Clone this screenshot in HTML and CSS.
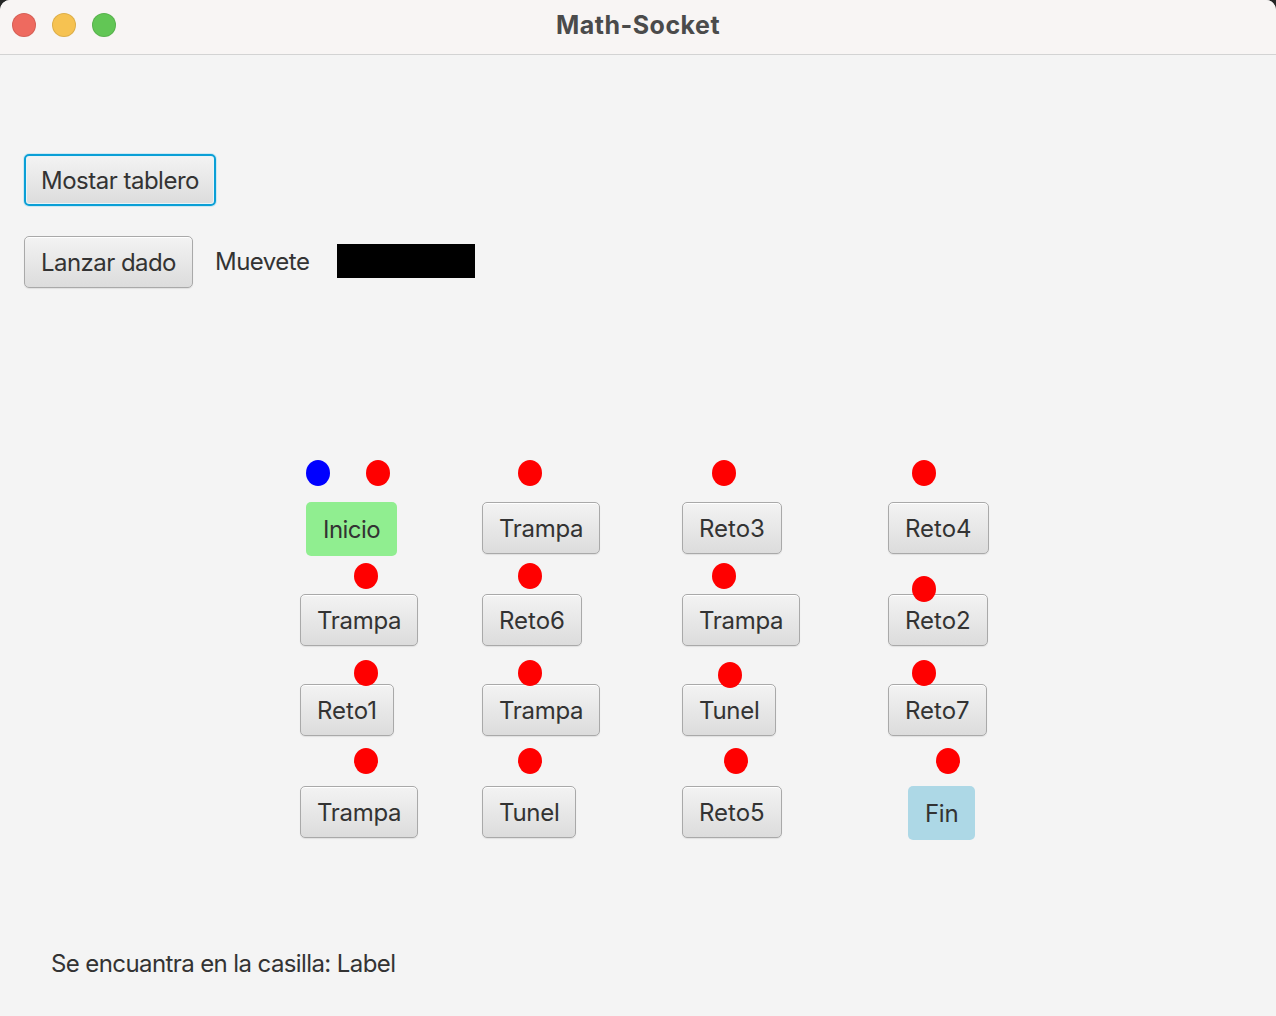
FILE: index.html
```html
<!DOCTYPE html>
<html lang="es">
<head>
<meta charset="utf-8">
<title>Math-Socket</title>
<link rel="stylesheet" href="styles.css">
</head>
<body>
<div class="window">
  <header class="titlebar">
    <div class="lights">
      <span class="light red"></span>
      <span class="light yellow"></span>
      <span class="light green"></span>
    </div>
    <div class="title">Math-Socket</div>
  </header>
  <main class="content">
    <button class="btn focused">Mostar tablero</button>
    <div class="dice-row">
      <button class="btn tight">Lanzar dado</button>
      <span class="label">Muevete</span>
      <span class="black-box"></span>
    </div>
    <section class="board">
      <div class="grid">
        <button class="btn start tight">Inicio</button>
        <button class="btn">Trampa</button>
        <button class="btn wide">Reto3</button>
        <button class="btn wide">Reto4</button>
        <button class="btn">Trampa</button>
        <button class="btn wide">Reto6</button>
        <button class="btn">Trampa</button>
        <button class="btn wide">Reto2</button>
        <button class="btn wide">Reto1</button>
        <button class="btn">Trampa</button>
        <button class="btn">Tunel</button>
        <button class="btn wide">Reto7</button>
        <button class="btn">Trampa</button>
        <button class="btn">Tunel</button>
        <button class="btn wide">Reto5</button>
        <button class="btn end">Fin</button>
      </div>
      <span class="dot blue" style="left:6px;top:0px"></span>
      <span class="dot" style="left:66px;top:0px"></span>
      <span class="dot" style="left:218px;top:0px"></span>
      <span class="dot" style="left:412px;top:0px"></span>
      <span class="dot" style="left:612px;top:0px"></span>
      <span class="dot" style="left:54px;top:103px"></span>
      <span class="dot" style="left:218px;top:103px"></span>
      <span class="dot" style="left:412px;top:103px"></span>
      <span class="dot" style="left:612px;top:116px"></span>
      <span class="dot" style="left:54px;top:200px"></span>
      <span class="dot" style="left:218px;top:200px"></span>
      <span class="dot" style="left:418px;top:202px"></span>
      <span class="dot" style="left:612px;top:200px"></span>
      <span class="dot" style="left:54px;top:288px"></span>
      <span class="dot" style="left:218px;top:288px"></span>
      <span class="dot" style="left:424px;top:288px"></span>
      <span class="dot" style="left:636px;top:288px"></span>
    </section>
    <p class="status">Se encuantra en la casilla: Label</p>
  </main>
</div>
</body>
</html>
```

FILE: styles.css
```css
html {
  background: #262626;
}
body {
  margin: 0;
  font-family: Inter, "Open Sans", "Liberation Sans", sans-serif;
  color: #333333;
}
.window {
  width: 1276px;
  height: 1016px;
  background: #f4f4f4;
  border-radius: 10px 10px 0 0;
  overflow: hidden;
}
.titlebar {
  position: relative;
  height: 54px;
  background: #f8f5f4;
  border-bottom: 1px solid #d3d3d3;
  display: flex;
  align-items: center;
  justify-content: center;
}
.lights {
  position: absolute;
  left: 12px;
  top: 13px;
  display: flex;
  gap: 16px;
}
.light {
  width: 24px;
  height: 24px;
  border-radius: 50%;
  box-shadow: inset 0 0 0 1px rgba(0, 0, 0, 0.1);
}
.red { background: #ee6a5f; }
.yellow { background: #f6c251; }
.green { background: #62c655; }
.title {
  margin-top: -4px;
  font-size: 25px;
  font-weight: 700;
  color: #4b4b4b;
  letter-spacing: 0.5px;
}
.content {
  padding: 99px 0 0 24px;
}
.btn {
  display: block;
  height: 52px;
  padding: 0 16px;
  font-family: Inter, "Open Sans", "Liberation Sans", sans-serif;
  font-size: 24px;
  letter-spacing: -0.3px;
  color: #333333;
  border: 1px solid #a9a9a9;
  border-radius: 5px;
  background: linear-gradient(#f3f3f3, #dcdcdc);
  box-shadow: inset 0 1px 0 #ffffff, 0 1px 1px rgba(0, 0, 0, 0.08);
  white-space: nowrap;
  cursor: default;
}
.btn.tight {
  letter-spacing: -0.55px;
}
.btn.wide {
  letter-spacing: 0;
}
.btn.focused {
  border: 2px solid #0a9fd6;
  box-shadow: inset 0 0 0 1px #e8f4f8, 0 0 0 1px #cde9f3;
  padding: 0 15px;
  letter-spacing: -0.5px;
}
.dice-row {
  margin-top: 30px;
  display: flex;
  align-items: center;
}
.label {
  margin-left: 22px;
  margin-top: -2px;
  font-size: 24px;
  letter-spacing: -0.5px;
  color: #333333;
}
.black-box {
  margin-left: 28px;
  margin-top: -2px;
  width: 138px;
  height: 34px;
  background: #000000;
}
.board {
  position: relative;
  margin: 172px 0 0 276px;
  width: 700px;
}
.grid {
  padding-top: 42px;
  display: grid;
  grid-template-columns: 182px 200px 206px auto;
  grid-template-rows: 92px 90px 102px auto;
  align-items: start;
  justify-items: start;
}
.btn.start {
  margin-left: 6px;
  height: 54px;
  border: none;
  border-radius: 5px;
  background: #90ee90;
  box-shadow: none;
  padding: 0 17px;
}
.btn.end {
  margin-left: 20px;
  height: 54px;
  border: none;
  border-radius: 5px;
  background: #add8e6;
  box-shadow: none;
  padding: 0 17px;
}
.dot {
  position: absolute;
  width: 24px;
  height: 26px;
  border-radius: 50%;
  background: #ff0000;
}
.dot.blue {
  background: #0000ff;
}
.status {
  margin: 109px 0 0 27px;
  font-size: 24px;
  letter-spacing: -0.6px;
  line-height: 30px;
  color: #333333;
}
```
